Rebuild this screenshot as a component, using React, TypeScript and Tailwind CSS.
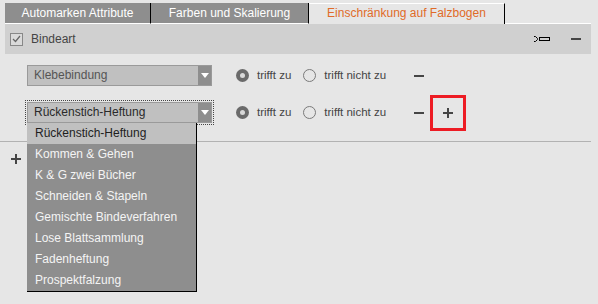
import { ReactNode } from 'react';

const items = [
  'Rückenstich-Heftung',
  'Kommen & Gehen',
  'K & G zwei Bücher',
  'Schneiden & Stapeln',
  'Gemischte Bindeverfahren',
  'Lose Blattsammlung',
  'Fadenheftung',
  'Prospektfalzung',
];

function Minus() {
  return <span className="block h-[2px] w-[10px] bg-[#454545]" />;
}

function Plus() {
  return (
    <span className="relative block h-[10px] w-[10px]">
      <span className="absolute left-0 top-[4px] h-[2px] w-[10px] bg-[#454545]" />
      <span className="absolute left-[4px] top-0 h-[10px] w-[2px] bg-[#454545]" />
    </span>
  );
}

function Radio({ on }: { on?: boolean }) {
  return on ? (
    <span className="grid h-[13px] w-[13px] place-items-center rounded-full bg-[#6a6a6a]">
      <span className="h-[5px] w-[5px] rounded-full bg-[#d8d8d8]" />
    </span>
  ) : (
    <span className="block h-[13px] w-[13px] rounded-full border border-[#7a7a7a]" />
  );
}

function Select({ label, focused }: { label: string; focused?: boolean }) {
  return (
    <div
      className={`flex h-[21px] w-[185px] border border-[#9a9a9a] bg-[#c0c0c0] ${
        focused ? 'outline-1 outline-dotted outline-offset-1 outline-[#444]' : ''
      }`}
    >
      <span className={`flex-1 pl-[6px] leading-[19px] ${focused ? 'text-[#2a2a2a]' : 'text-[#555]'}`}>{label}</span>
      <span className="grid w-[13px] place-items-center bg-[#8e8e8e]">
        <svg width="8" height="5" viewBox="0 0 8 5">
          <path d="M0 0h8L4 5z" fill="#fff" />
        </svg>
      </span>
    </div>
  );
}

function Row({ label, focused, extra }: { label: string; focused?: boolean; extra?: ReactNode }) {
  return (
    <div className="flex items-center pl-[27px]">
      <Select label={label} focused={focused} />
      <span className="ml-[24px]"><Radio on /></span>
      <span className="ml-[8px] text-[11.5px] text-[#444]">trifft zu</span>
      <span className="ml-[12px]"><Radio /></span>
      <span className="ml-[8px] text-[11.5px] text-[#444]">trifft nicht zu</span>
      <span className="ml-[28px]"><Minus /></span>
      {extra}
    </div>
  );
}

export default function App() {
  return (
    <div className="relative h-[304px] w-[598px] overflow-hidden bg-[#e6e6e6] font-['Liberation_Sans',Arial,sans-serif] text-[12px]">
      {/* TABS */}
      <div className="flex h-[21px] pl-[5px] mt-[3px] w-[591px]">
        <div className="w-[146px] border-r border-b border-r-black border-b-white bg-[#8e8e8e] text-center leading-[20px] text-white">
          Automarken Attribute
        </div>
        <div className="w-[158px] border-r border-b border-r-black border-b-white bg-[#8e8e8e] text-center leading-[20px] text-white">
          Farben und Skalierung
        </div>
        <div className="w-[196px] border-r border-t border-r-black border-t-white bg-[#e6e6e6] text-center leading-[19px] text-[#e06b28]">
          Einschränkung auf Falzbogen
        </div>
        <div className="flex-1 border-b border-white" />
      </div>

      {/* HEADER */}
      <div className="ml-[5px] flex h-[30px] w-[586px] items-center bg-[#d0d0d0]">
        <span className="ml-[5px] grid h-[13px] w-[13px] place-items-center border border-[#888] bg-[#dadada]">
          <svg width="9" height="8" viewBox="0 0 9 8">
            <path d="M1 4l2.5 2.5L8 1" fill="none" stroke="#666" strokeWidth="1.2" />
          </svg>
        </span>
        <span className="ml-[8px] text-[#444]">Bindeart</span>
        <svg className="ml-auto" width="17" height="6" viewBox="0 0 17 6">
          <path d="M0 0.5h1.5l2 2v1l-2 2H0" fill="none" stroke="#000" strokeWidth="1" />
          <rect x="5.5" y="1.5" width="10" height="3" fill="none" stroke="#000" strokeWidth="1" />
        </svg>
        <span className="ml-[20px] mr-[10px]"><Minus /></span>
      </div>

      {/* ROWS */}
      <div className="mt-[11px]">
        <Row label="Klebebindung" />
      </div>
      <div className="mt-[16px]">
        <Row
          label="Rückenstich-Heftung"
          focused
          extra={
            <span className="relative ml-[19px]">
              <Plus />
              <span className="absolute -left-[13px] -top-[13px] h-[36px] w-[36px] border-[3px] border-[#ed1c24]" />
            </span>
          }
        />
      </div>

      <div className="mt-[18px] h-px w-[591px] bg-[#b2b2b2]" />
      <div className="ml-[11px] mt-[12px]"><Plus /></div>

      {/* DROPDOWN LIST */}
      <div className="absolute left-[27px] top-[123px] w-[170px] border-r border-b border-black bg-[#8e8e8e]">
        {items.map((it, i) => (
          <div
            key={it}
            className={`h-[21px] pl-[8px] leading-[21px] ${i === 0 ? 'bg-[#c0c0c0] text-[#1e1e1e]' : 'text-[#f4f4f4]'}`}
          >
            {it}
          </div>
        ))}
      </div>
    </div>
  );
}
